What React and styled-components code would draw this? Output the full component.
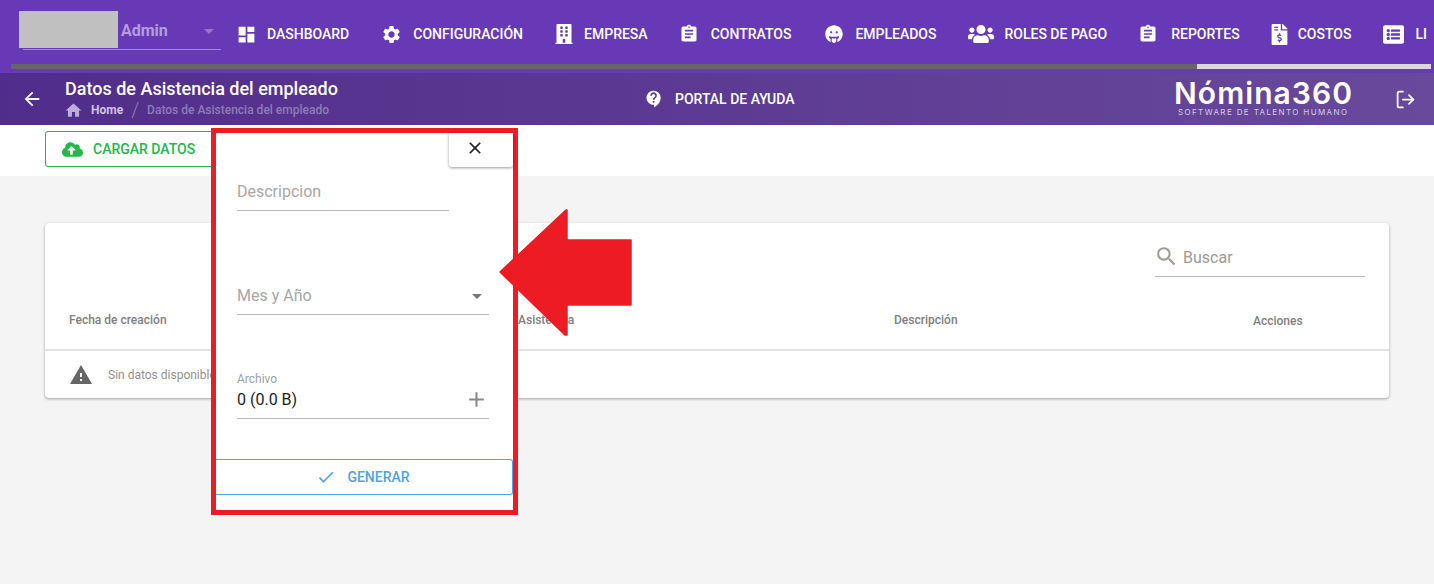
import React from "react"
import styled, { createGlobalStyle } from "styled-components"
import {
  MdDashboard,
  MdSettings,
  MdAssignment,
  MdContactSupport,
  MdArrowBack,
  MdHome,
  MdClose,
  MdCheck,
  MdAdd,
  MdSearch,
  MdWarning,
  MdArrowDropDown,
} from "react-icons/md"
import {
  FaBuilding,
  FaUsers,
  FaFileInvoiceDollar,
  FaListAlt,
  FaCloudUploadAlt,
  FaGrinTongue,
} from "react-icons/fa"
import { FiLogOut } from "react-icons/fi"

const navItems = [
  { label: "Dashboard", Icon: MdDashboard, size: 21, slot: 29, inset: -2 },
  { label: "Configuración", Icon: MdSettings, size: 21, slot: 32, inset: 0 },
  { label: "Empresa", Icon: FaBuilding, size: 20, slot: 29, inset: -1 },
  { label: "Contratos", Icon: MdAssignment, size: 20, slot: 31, inset: -1 },
  { label: "Empleados", Icon: FaGrinTongue, size: 18, slot: 32, inset: 2 },
  { label: "Roles de pago", Icon: FaUsers, size: 26, slot: 36, inset: 0 },
  { label: "Reportes", Icon: MdAssignment, size: 20, slot: 32, inset: -1 },
  { label: "Costos", Icon: FaFileInvoiceDollar, size: 21, slot: 26, inset: -3 },
  { label: "Li", Icon: FaListAlt, size: 21, slot: 32, inset: 0 },
]

function App() {
  return (
    <>
      <GlobalStyle />
      <Page>
        <TopBar>
          <NavRow>
            <UserSelect>
              <UserPhoto />
              <UserName>Admin</UserName>
              <SelectCaret>
                <MdArrowDropDown size={24} color="#9575cd" />
              </SelectCaret>
            </UserSelect>
            <NavList>
              {navItems.map(({ label, Icon, size, slot, inset }) => (
                <NavItem key={label}>
                  <NavIcon $slot={slot} $inset={inset}>
                    <Icon size={size} />
                  </NavIcon>
                  {label}
                </NavItem>
              ))}
            </NavList>
          </NavRow>
          <ProgressTrack>
            <ProgressFill />
          </ProgressTrack>
        </TopBar>

        <SubHeader>
          <TitleBlock>
            <MdArrowBack size={22} color="#fff" />
            <div>
              <PageTitle>Datos de Asistencia del empleado</PageTitle>
              <Breadcrumbs>
                <MdHome size={19} />
                <CrumbLink>Home</CrumbLink>
                <CrumbSlash>/</CrumbSlash>
                <CrumbCurrent>Datos de Asistencia del empleado</CrumbCurrent>
              </Breadcrumbs>
            </div>
          </TitleBlock>
          <HelpLink>
            <MdContactSupport size={20} />
            Portal de ayuda
          </HelpLink>
          <Logo viewBox="0 0 178 52">
            <LogoName x="0" y="31" textLength="178" lengthAdjust="spacing">
              Nómina360
            </LogoName>
            <LogoTag x="4" y="42" textLength="169" lengthAdjust="spacing">
              SOFTWARE DE TALENTO HUMANO
            </LogoTag>
          </Logo>
          <LogoutButton>
            <FiLogOut size={21} />
          </LogoutButton>
        </SubHeader>

        <Toolbar>
          <UploadButton>
            <FaCloudUploadAlt size={21} />
            Cargar datos
          </UploadButton>
        </Toolbar>

        <Content>
          <Card>
            <SearchRow>
              <SearchBox>
                <MdSearch size={25} />
                <span>Buscar</span>
              </SearchBox>
            </SearchRow>
            <HeadRow>
              <HeadCell>Fecha de creación</HeadCell>
              <HeadCell>Asistencia</HeadCell>
              <HeadCell>Descripción</HeadCell>
              <HeadCell $low>Acciones</HeadCell>
            </HeadRow>
            <EmptyRow>
              <MdWarning size={24} color="#666" />
              <span>Sin datos disponibles</span>
            </EmptyRow>
          </Card>
        </Content>

        <Drawer>
          <CloseRow>
            <CloseButton>
              <MdClose size={20} />
            </CloseButton>
          </CloseRow>
          <DescriptionField>
            <Placeholder>Descripcion</Placeholder>
          </DescriptionField>
          <MonthField>
            <Placeholder>Mes y Año</Placeholder>
            <MdArrowDropDown size={24} color="#777" />
          </MonthField>
          <FileField>
            <FileLabel>Archivo</FileLabel>
            <FileValue>
              0 (0.0 B)
              <MdAdd size={25} color="#8a8a8a" />
            </FileValue>
          </FileField>
          <GenerateButton>
            <MdCheck size={20} />
            Generar
          </GenerateButton>
        </Drawer>

        <PointerArrow viewBox="0 0 134 128">
          <path
            d="M1 63 L67 1 L68 1 L68 31 L132 31 L132 96 L68 96 L68 126 L66 126 Z"
            fill="#ed1c24"
            stroke="#ed1c24"
            strokeWidth="1.5"
            strokeLinejoin="round"
          />
        </PointerArrow>
      </Page>
    </>
  )
}

export default App

const GlobalStyle = createGlobalStyle`
  html, body {
    margin: 0;
    padding: 0;
    background: #f4f4f4;
    font-family: Roboto, "Liberation Sans", sans-serif;
  }
  * {
    box-sizing: border-box;
  }
`
const Page = styled.div`
  position: relative;
  width: 1434px;
  height: 584px;
  overflow: hidden;
  display: flex;
  flex-direction: column;
`
const TopBar = styled.header`
  height: 73px;
  background: #6739b6;
`
const NavRow = styled.div`
  height: 64px;
  display: flex;
  padding: 11px 0 0 23px;
`
const UserSelect = styled.div`
  width: 198px;
  height: 39px;
  display: flex;
  align-items: flex-start;
  border-bottom: 1px solid #a58bd6;
`
const UserPhoto = styled.div`
  width: 99px;
  height: 37px;
  margin-left: -4px;
  background: #c0c0c0;
`
const UserName = styled.span`
  width: 76px;
  margin-left: 3px;
  line-height: 39px;
  font-size: 16px;
  font-weight: 700;
  color: #b39ddf;
`
const SelectCaret = styled.span`
  display: flex;
  margin-top: 8px;
`
const NavList = styled.nav`
  display: flex;
  gap: 32px;
  margin-left: 17px;
  height: 46px;
  white-space: nowrap;
`
const NavItem = styled.a`
  display: flex;
  align-items: center;
  font-size: 14px;
  font-weight: 500;
  color: #fff;
  text-transform: uppercase;
`
const NavIcon = styled.span`
  display: flex;
  width: ${(p) => p.$slot}px;
  flex-shrink: 0;
  margin-left: ${(p) => p.$inset}px;
  margin-right: ${(p) => -p.$inset}px;
`
const ProgressTrack = styled.div`
  width: 1420px;
  height: 5px;
  margin-left: 11px;
  background: #d9d9d9;
`
const ProgressFill = styled.div`
  width: 1186px;
  height: 100%;
  background: #666;
`
const SubHeader = styled.section`
  height: 52px;
  display: flex;
  align-items: center;
  color: #fff;
  background: linear-gradient(90deg, #512d8b, #68499b);
`
const TitleBlock = styled.div`
  width: 644px;
  display: flex;
  align-items: center;
  gap: 22px;
  padding-left: 21px;
`
const PageTitle = styled.h1`
  margin: 0;
  font-size: 18px;
  line-height: 22px;
  font-weight: 500;
`
const Breadcrumbs = styled.div`
  display: flex;
  align-items: center;
  height: 20px;
  font-size: 12px;
  color: #cfc3e4;

  svg {
    margin-left: -1px;
    color: #bdaedb;
  }
`
const CrumbLink = styled.span`
  margin-left: 8px;
  font-weight: 700;
`
const CrumbSlash = styled.span`
  margin: 0 8px;
  font-size: 20px;
  font-weight: 300;
  color: #8f7cb6;
`
const CrumbCurrent = styled.span`
  color: #8f7cb6;
  font-weight: 500;
`
const HelpLink = styled.a`
  width: 530px;
  display: flex;
  align-items: center;
  gap: 11px;
  font-size: 14px;
  font-weight: 500;
  text-transform: uppercase;
`
const Logo = styled.svg`
  width: 178px;
  height: 52px;
  flex-shrink: 0;
`
const LogoName = styled.text`
  font-family: Inter, "Open Sans", sans-serif;
  font-size: 30px;
  font-weight: 600;
  fill: #fff;
`
const LogoTag = styled.text`
  font-family: Inter, "Open Sans", sans-serif;
  font-size: 8px;
  fill: #d5cde6;
`
const LogoutButton = styled.div`
  display: flex;
  margin-left: 43px;
`
const Toolbar = styled.div`
  height: 51px;
  padding: 6px 0 0 45px;
  background: #fff;
`
const UploadButton = styled.button`
  width: 176px;
  height: 36px;
  display: flex;
  align-items: center;
  gap: 10px;
  padding: 0 0 0 16px;
  font: 500 14px Roboto, sans-serif;
  color: #22b84a;
  text-transform: uppercase;
  background: #fff;
  border: 1px solid #22b84a;
  border-radius: 3px;
`
const Content = styled.main`
  flex: 1;
  padding: 47px 45px 0;
  background: #f4f4f4;
`
const Card = styled.div`
  height: 175px;
  background: #fff;
  border-radius: 4px;
  box-shadow: 0 1px 3px rgba(0, 0, 0, 0.35);
`
const SearchRow = styled.div`
  height: 54px;
  display: flex;
  justify-content: flex-end;
  padding: 17px 24px 0 0;
`
const SearchBox = styled.div`
  width: 210px;
  height: 37px;
  display: flex;
  align-items: flex-end;
  gap: 4px;
  padding: 0 0 7px 0;
  color: #a09a94;
  font-size: 16px;
  line-height: 22px;
  border-bottom: 1px solid #bbb;

  svg {
    margin-left: -1px;
  }
`
const HeadRow = styled.div`
  height: 74px;
  display: grid;
  grid-template-columns: 449px 376px 359px 1fr;
  padding: 0 0 0 24px;
  border-bottom: 2px solid #e2e2e2;
`
const HeadCell = styled.div`
  padding-top: ${(p) => (p.$low ? "37px" : "36px")};
  font-size: 12px;
  line-height: 14px;
  font-weight: 500;
  color: #808080;
`
const EmptyRow = styled.div`
  height: 47px;
  display: flex;
  align-items: center;
  gap: 15px;
  padding-left: 24px;
  font-size: 12px;
  color: #909090;
`
const Drawer = styled.aside`
  position: absolute;
  left: 211px;
  top: 128px;
  width: 307px;
  height: 387px;
  background: #fff;
  border: 5px solid #ed1c24;
`
const CloseRow = styled.div`
  height: 34px;
  display: flex;
  justify-content: flex-end;
`
const CloseButton = styled.button`
  width: 64px;
  height: 34px;
  padding: 0 12px 4px 0;
  display: flex;
  align-items: center;
  justify-content: center;
  color: #222;
  background: #fff;
  border: 0;
  border-radius: 0 0 3px 3px;
  box-shadow: 0 1px 3px rgba(0, 0, 0, 0.4);
`
const FieldLine = styled.div`
  display: flex;
  align-items: center;
  justify-content: space-between;
  margin-left: 21px;
  border-bottom: 1px solid #bbb;
`
const DescriptionField = styled(FieldLine)`
  width: 212px;
  height: 38px;
  margin-top: 6px;
`
const MonthField = styled(FieldLine)`
  width: 252px;
  height: 38px;
  margin-top: 66px;
`
const Placeholder = styled.span`
  font-size: 16px;
  color: #a6a6a6;
`
const FileField = styled(FieldLine)`
  width: 252px;
  height: 48px;
  margin-top: 56px;
  padding-top: 1px;
  display: block;
`
const FileLabel = styled.div`
  font-size: 12px;
  line-height: 14px;
  color: #a0a0a0;
`
const FileValue = styled.div`
  display: flex;
  align-items: center;
  justify-content: space-between;
  height: 28px;
  margin-top: -1px;
  font-size: 16px;
  color: #222;
`
const GenerateButton = styled.button`
  width: 297px;
  height: 36px;
  margin-top: 40px;
  padding: 0 2px 0 0;
  display: flex;
  align-items: center;
  justify-content: center;
  gap: 11px;
  font: 500 14px Roboto, sans-serif;
  color: #4fa3e8;
  text-transform: uppercase;
  background: #fff;
  border: 1px solid #4fa3e8;
  border-left: 0;
  border-radius: 0 3px 3px 0;
`
const PointerArrow = styled.svg`
  position: absolute;
  left: 499px;
  top: 209px;
  width: 134px;
  height: 128px;
`
